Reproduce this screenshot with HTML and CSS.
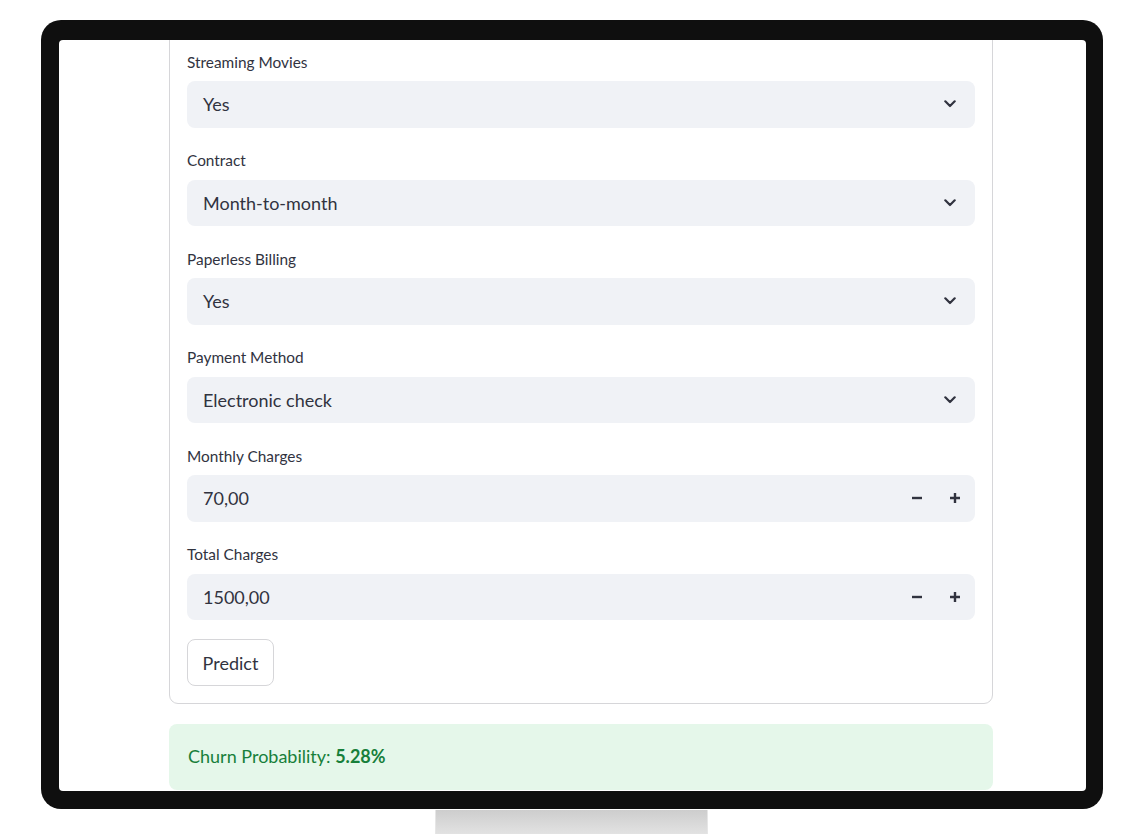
FILE: index.html
```html
<!DOCTYPE html>
<html lang="en">
<head>
<meta charset="utf-8">
<title>Churn Prediction</title>
<link rel="stylesheet" href="styles.css">
</head>
<body>
<div class="stage">
  <div class="monitor">
    <div class="screen">
      <div class="content">
        <form class="form">
          <div class="widget">
            <label class="label">Streaming Movies</label>
            <div class="select"><span>Yes</span><svg class="chev" viewBox="0 0 12 8" width="12" height="8"><path d="M1.3 1.3 L6 6 L10.7 1.3" fill="none" stroke="#31333f" stroke-width="2.2" stroke-linecap="round" stroke-linejoin="round"/></svg></div>
          </div>
          <div class="widget">
            <label class="label">Contract</label>
            <div class="select"><span>Month-to-month</span><svg class="chev" viewBox="0 0 12 8" width="12" height="8"><path d="M1.3 1.3 L6 6 L10.7 1.3" fill="none" stroke="#31333f" stroke-width="2.2" stroke-linecap="round" stroke-linejoin="round"/></svg></div>
          </div>
          <div class="widget">
            <label class="label">Paperless Billing</label>
            <div class="select"><span>Yes</span><svg class="chev" viewBox="0 0 12 8" width="12" height="8"><path d="M1.3 1.3 L6 6 L10.7 1.3" fill="none" stroke="#31333f" stroke-width="2.2" stroke-linecap="round" stroke-linejoin="round"/></svg></div>
          </div>
          <div class="widget">
            <label class="label">Payment Method</label>
            <div class="select"><span>Electronic check</span><svg class="chev" viewBox="0 0 12 8" width="12" height="8"><path d="M1.3 1.3 L6 6 L10.7 1.3" fill="none" stroke="#31333f" stroke-width="2.2" stroke-linecap="round" stroke-linejoin="round"/></svg></div>
          </div>
          <div class="widget">
            <label class="label">Monthly Charges</label>
            <div class="number"><span class="value">70,00</span>
              <span class="step"><svg viewBox="0 0 12 12" width="12" height="12"><path d="M1 6 H11" stroke="#31333f" stroke-width="2.4"/></svg></span>
              <span class="step"><svg viewBox="0 0 12 12" width="12" height="12"><path d="M1 6 H11 M6 1 V11" stroke="#31333f" stroke-width="2.4"/></svg></span>
            </div>
          </div>
          <div class="widget">
            <label class="label">Total Charges</label>
            <div class="number"><span class="value">1500,00</span>
              <span class="step"><svg viewBox="0 0 12 12" width="12" height="12"><path d="M1 6 H11" stroke="#31333f" stroke-width="2.4"/></svg></span>
              <span class="step"><svg viewBox="0 0 12 12" width="12" height="12"><path d="M1 6 H11 M6 1 V11" stroke="#31333f" stroke-width="2.4"/></svg></span>
            </div>
          </div>
          <div class="widget">
            <button type="button" class="btn">Predict</button>
          </div>
        </form>
        <div class="success">Churn Probability: <strong>5.28%</strong></div>
      </div>
    </div>
  </div>
  <div class="stand"></div>
</div>
</body>
</html>
```
FILE: styles.css
```css
html, body {
  margin: 0;
  padding: 0;
  background: #ffffff;
  overflow: hidden;
}
body {
  font-family: "Lato", "Noto Sans", sans-serif;
  color: #31333f;
}
.stage {
  width: 1131px;
  height: 834px;
  padding-top: 20px;
  box-sizing: border-box;
  display: flex;
  flex-direction: column;
}
.monitor {
  flex: none;
  margin-left: 41px;
  width: 1062px;
  height: 789px;
  box-sizing: border-box;
  padding: 20px 17px 18px 18px;
  background: #0f0f0f;
  border-radius: 20px;
}
.screen {
  height: 100%;
  background: #ffffff;
  border-radius: 4px;
  overflow: hidden;
}
.content {
  padding: 0 93px 0 110px;
  display: flex;
  flex-direction: column;
}
.form {
  margin-top: -12px;
  border: 1px solid #d6d6d9;
  border-radius: 9px;
  padding: 19px 17px 17px 17px;
  display: flex;
  flex-direction: column;
  gap: 19px;
}
.widget {
  display: flex;
  flex-direction: column;
}
.label {
  height: 27px;
  margin-bottom: 6px;
  display: flex;
  align-items: center;
  font-size: 15.4px;
  line-height: 20px;
}
.select, .number {
  height: 46.5px;
  background: #f0f2f6;
  border-radius: 8px;
  display: flex;
  align-items: center;
  font-size: 18px;
  box-sizing: border-box;
}
.select {
  padding: 0 19px 0 16px;
  justify-content: space-between;
}
.chev {
  display: block;
}
.number {
  padding-left: 16px;
}
.number .value {
  flex: 1;
}
.step {
  width: 38px;
  height: 100%;
  display: flex;
  align-items: center;
  justify-content: center;
}
.step:last-child {
  margin-right: 1px;
}
.step svg {
  display: block;
}
.btn {
  align-self: flex-start;
  width: 87px;
  height: 47px;
  background: #ffffff;
  border: 1px solid #d6d6d9;
  border-radius: 8px;
  font-family: inherit;
  font-size: 18px;
  color: #31333f;
  padding: 0;
}
.success {
  flex: none;
  margin-top: 20px;
  background: #e5f7ea;
  border-radius: 8px;
  padding: 18px 18px 20px 19px;
  font-size: 18px;
  line-height: 28px;
  color: #177f3a;
}
.success strong {
  font-weight: 700;
}
.stand {
  flex: none;
  margin-left: 435px;
  margin-top: 1px;
  width: 273px;
  height: 25px;
  background: linear-gradient(to bottom, #cdcdcd, #e3e3e3);
  border-left: 1px solid #e6e6e6;
  border-right: 1px solid #e6e6e6;
  box-sizing: border-box;
}
```
